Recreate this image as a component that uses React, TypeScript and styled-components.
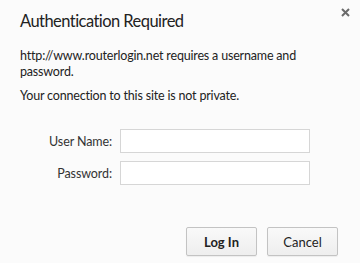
import React from 'react'
import styled, { createGlobalStyle } from 'styled-components'

const GlobalStyle = createGlobalStyle`
    html, body {
        margin: 0;
        padding: 0;
        background: #fbfbfb;
    }
    * {
        box-sizing: border-box;
    }
`

export default function App() {
    const [user, setUser] = React.useState('')
    const [pass, setPass] = React.useState('')

    return (
        <>
            <GlobalStyle />
            <Dialog>
                <CloseButton aria-label="Close">
                    <svg width="9" height="9" viewBox="0 0 9 9">
                        <path d="M1 1 L8 8 M8 1 L1 8" stroke="#6a6a6a" strokeWidth="2" />
                    </svg>
                </CloseButton>
                <Title>Authentication Required</Title>
                <Message>http://www.routerlogin.net requires a username and password.</Message>
                <Message>Your connection to this site is not private.</Message>
                <Form>
                    <Label htmlFor="user">User Name:</Label>
                    <Field id="user" value={user} onChange={(e) => setUser(e.target.value)} />
                    <Label htmlFor="pass">Password:</Label>
                    <Field id="pass" type="password" value={pass} onChange={(e) => setPass(e.target.value)} />
                </Form>
                <Buttons>
                    <Button primary>Log In</Button>
                    <Button>Cancel</Button>
                </Buttons>
            </Dialog>
        </>
    )
}

const Dialog = styled.div`
    position: relative;
    width: 360px;
    height: 263px;
    padding: 10px 20px 0 20px;
    background: #fbfbfb;
    color: #222;
    font-family: Lato, 'Liberation Sans', sans-serif;
`

const CloseButton = styled.button`
    position: absolute;
    top: 7px;
    right: 9px;
    width: 11px;
    height: 11px;
    padding: 1px;
    border: 0;
    background: none;
    display: flex;
    cursor: pointer;
`

const Title = styled.h1`
    margin: 0 0 16px 0;
    font-size: 16.5px;
    font-weight: 400;
    letter-spacing: -0.55px;
    line-height: 22px;
    color: #222;
`

const Message = styled.p`
    margin: 0 0 8px 0;
    font-size: 12.5px;
    letter-spacing: -0.18px;
    line-height: 16px;
    color: #222;
`

const Form = styled.div`
    display: grid;
    grid-template-columns: 92px 190px;
    column-gap: 8px;
    row-gap: 8px;
    align-items: center;
    margin-top: 25px;
`

const Label = styled.label`
    text-align: right;
    font-size: 12.5px;
    letter-spacing: -0.1px;
    color: #333;
`

const Field = styled.input`
    height: 24px;
    border: 1px solid #d6d6d6;
    background: #fff;
    outline: none;
    font-size: 12px;
    padding: 0 4px;
`

const Buttons = styled.div`
    display: flex;
    justify-content: flex-end;
    gap: 10px;
    margin-top: 42px;
    padding-right: 2px;
`

const Button = styled.button<{ primary?: boolean }>`
    width: 71px;
    height: 29px;
    border: 1px solid #c3c3c3;
    border-radius: 2px;
    background: linear-gradient(#f9f9f9, #eeeeee);
    box-shadow: 0 1px 1px rgba(0, 0, 0, 0.06);
    font-family: Lato, 'Liberation Sans', sans-serif;
    font-size: 13px;
    font-weight: ${(props) => (props.primary ? 700 : 400)};
    color: #222;
    cursor: pointer;
`
